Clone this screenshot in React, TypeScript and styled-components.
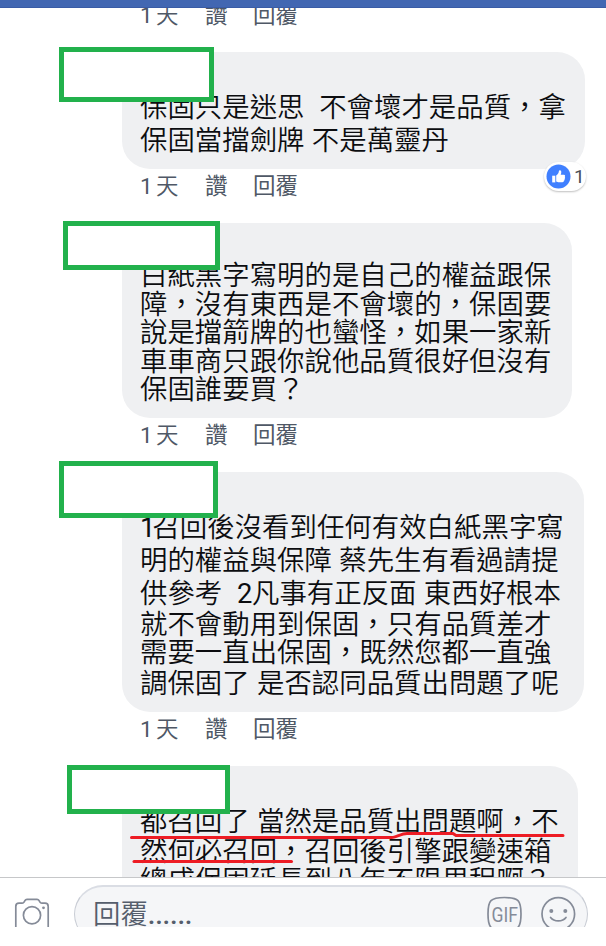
import React from "react";
import styled, { createGlobalStyle } from "styled-components";

const GlobalStyle = createGlobalStyle`
  html, body { margin: 0; padding: 0; background: #fff; }
  body { font-family: Roboto, "Noto Sans CJK TC", sans-serif; overflow: hidden; }
`;

const Screen = styled.main`
  width: 606px;
  height: 927px;
  display: flex;
  flex-direction: column;
  background: #fff;
  overflow: hidden;
`;

const TopBar = styled.header`
  flex: none;
  height: 7px;
  background: #4267b2;
  border-bottom: 1px solid #3a5ca6;
`;

const Feed = styled.section`
  flex: 1;
  min-height: 0;
  overflow: hidden;
`;

const PreviousComment = styled.div`
  display: flex;
  flex-direction: column;
  justify-content: flex-end;
  height: 44px;
  padding-left: 122px;
`;

const Comment = styled.article`
  position: relative;
  padding-left: 122px;
`;

const Bubble = styled.div<{ $width: number; $height: number; $top: number }>`
  box-sizing: border-box;
  width: ${(p) => p.$width}px;
  height: ${(p) => p.$height}px;
  padding: ${(p) => p.$top}px 0 0 18px;
  border-radius: 28px;
  background: #eff0f2;
`;

const Line = styled.div<{ $height: number }>`
  height: ${(p) => p.$height}px;
  line-height: ${(p) => p.$height}px;
  font-size: 27.4px;
  font-weight: 350;
  letter-spacing: 0.03px;
  word-spacing: 0.6px;
  color: #0c0d10;
  white-space: pre;
`;

const Digit = styled.span<{ $tight?: boolean }>`
  font-weight: 400;
  letter-spacing: ${(p) => (p.$tight ? -3 : -0.3)}px;
`;

const Meta = styled.div<{ $after: number }>`
  display: flex;
  height: 34px;
  padding-left: 18px;
  margin-bottom: ${(p) => p.$after}px;
  line-height: 34px;
  font-size: 22.5px;
  font-weight: 400;
  color: #4f5866;
  white-space: pre;
`;

const Age = styled.span`
  width: 65px;
  font-weight: 350;
  word-spacing: -1.8px;
`;

const Action = styled.span<{ $width: number }>`
  width: ${(p) => p.$width}px;
`;

const Redaction = styled.div<{ $x: number; $y: number; $w: number; $h: number }>`
  position: absolute;
  left: ${(p) => p.$x}px;
  top: ${(p) => p.$y}px;
  box-sizing: border-box;
  width: ${(p) => p.$w}px;
  height: ${(p) => p.$h}px;
  border: 5px solid #22b14c;
  background: #fff;
`;

const Reaction = styled.div`
  position: absolute;
  left: 544px;
  top: 110px;
  box-sizing: border-box;
  display: flex;
  align-items: center;
  gap: 3px;
  width: 42px;
  height: 29px;
  padding-left: 2px;
  border-radius: 15px;
  background: #fff;
  box-shadow: 0 1px 2px rgba(0, 0, 0, 0.25);
  font-size: 19px;
  color: #4b4f56;
`;

const Underlines = styled.svg`
  position: absolute;
  left: 0;
  top: 60px;
`;

const Composer = styled.footer`
  flex: none;
  box-sizing: border-box;
  display: flex;
  height: 50px;
  border-top: 1px solid #c6c7c9;
  padding: 7px 0 0 14px;
  background: #fff;
`;

const CameraSlot = styled.div`
  width: 60px;
  padding-top: 13px;
`;

const ReplyField = styled.div`
  box-sizing: border-box;
  display: flex;
  width: 514px;
  height: 58px;
  padding: 9px 11px 0 18px;
  border: 1px solid #c8ccd4;
  border-top: 2px solid #dadde4;
  border-radius: 29px;
  background: #f5f6f8;
`;

const Placeholder = styled.span`
  flex: 1;
  line-height: 38px;
  font-size: 27.4px;
  font-weight: 350;
  color: #555e6c;
`;

const Dots = styled.span`
  font-weight: 500;
  letter-spacing: -0.2px;
`;

const ToolIcons = styled.div`
  display: flex;
  gap: 18px;
`;

type CommentData = {
  width: number;
  height: number;
  top: number;
  lines: [React.ReactNode, number][];
  box: [number, number, number, number];
  after: number;
};

const comments: CommentData[] = [
  {
    width: 463, height: 117, top: 40, after: 20, box: [59, -5, 155, 55],
    lines: [["保固只是迷思  不會壞才是品質，拿", 33], ["保固當擋劍牌 不是萬靈丹", 33]],
  },
  {
    width: 450, height: 195, top: 39, after: 20, box: [63, -2, 157, 49],
    lines: [
      ["白紙黑字寫明的是自己的權益跟保", 28.6],
      ["障，沒有東西是不會壞的，保固要", 28.6],
      ["說是擋箭牌的也蠻怪，如果一家新", 28.6],
      ["車車商只跟你說他品質很好但沒有", 28.6],
      ["保固誰要買？", 28.6],
    ],
  },
  {
    width: 462, height: 240, top: 40, after: 20, box: [59, -11, 159, 57],
    lines: [
      [<><Digit $tight>1</Digit>召回後沒看到任何有效白紙黑字寫</>, 33],
      ["明的權益與保障 蔡先生有看過請提", 33],
      [<>供參考  <Digit>2</Digit>凡事有正反面 東西好根本</>, 33],
      ["就不會動用到保固，只有品質差才", 28],
      ["需要一直出保固，既然您都一直強", 28.5],
      ["調保固了 是否認同品質出問題了呢", 33],
    ],
  },
  {
    width: 456, height: 240, top: 40, after: 0, box: [67, -1, 163, 49],
    lines: [
      ["都召回了 當然是品質出問題啊，不", 32],
      ["然何必召回，召回後引擎跟變速箱", 28],
      ["總成保固延長到八年不限里程啊？", 30.6],
    ],
  },
];

const MetaRow = ({ after }: { after: number }) => (
  <Meta $after={after}>
    <Age><Digit>1</Digit> 天</Age>
    <Action $width={48}>讚</Action>
    <Action $width={60}>回覆</Action>
  </Meta>
);

const LikeIcon = () => (
  <svg width="25" height="25" viewBox="0 0 25 25">
    <circle cx="12.5" cy="12.5" r="12" fill="#4080ff" />
    <path d="M6.2 11.7h3.1v6.7H6.2z" fill="#fff" />
    <path d="M10.2 11.5c1.8-1.2 2.5-2.3 2.7-4.4.1-1.2 2.4-1 2.4 1 0 1-.3 1.8-.6 2.7h3.1c1.5 0 1.7 1.6.9 2.2.7.6.5 1.5-.2 1.9.4.7.1 1.4-.6 1.7.1 1-.5 1.7-1.5 1.7h-3.3c-1.3 0-1.9-.4-2.9-.8z" fill="#fff" />
  </svg>
);

const CameraIcon = () => (
  <svg width="36" height="34" viewBox="0 0 36 34" fill="none" stroke="#858b98" strokeWidth="1.7">
    <path d="M5 5.2h3.2c1 0 1.5-.4 2-1.3l.7-1.3c.5-.9 1.2-1.2 2.1-1.2h10c.9 0 1.6.3 2.1 1.2l.7 1.3c.5.9 1 1.3 2 1.3H31c2 0 3.2 1.2 3.2 3.2V29c0 2-1.2 3.2-3.2 3.2H5c-2 0-3.2-1.2-3.2-3.2V8.4c0-2 1.2-3.2 3.2-3.2z" />
    <circle cx="18" cy="17.3" r="8.6" />
    <circle cx="29.5" cy="9.8" r="1.4" fill="#858b98" stroke="none" />
  </svg>
);

const GifIcon = () => (
  <svg width="36" height="36" viewBox="0 0 36 36">
    <path d="M18.5 1.5c14 0 16.5 3 16.5 16.5s-2.5 16.5-16.5 16.5S2 31.500 2 18 4.500 1.500 18.500 1.500z" fill="none" stroke="#858b98" strokeWidth="1.7" />
    <text x="5.5" y="25.5" textLength="26.5" lengthAdjust="spacingAndGlyphs" fontFamily="Roboto" fontSize="21" fontWeight="400" fill="#858b98">GIF</text>
  </svg>
);

const SmileIcon = () => (
  <svg width="36" height="36" viewBox="0 0 36 36" fill="none" stroke="#858b98" strokeWidth="1.7">
    <circle cx="18.3" cy="18" r="16.3" />
    <circle cx="11.3" cy="15" r="2" fill="#858b98" stroke="none" />
    <circle cx="25.3" cy="15" r="2" fill="#858b98" stroke="none" />
    <path d="M10.6 21.5c3.5 4.6 11.9 4.6 15.4 0" strokeLinecap="round" />
  </svg>
);

export default function App() {
  return (
    <Screen>
      <GlobalStyle />
      <TopBar />
      <Feed>
        <PreviousComment>
          <MetaRow after={20} />
        </PreviousComment>
        {comments.map((c, i) => (
          <Comment key={i}>
            <Bubble $width={c.width} $height={c.height} $top={c.top}>
              {c.lines.map(([text, h], n) => (
                <Line key={n} $height={h}>{text}</Line>
              ))}
            </Bubble>
            <Redaction $x={c.box[0]} $y={c.box[1]} $w={c.box[2]} $h={c.box[3]} />
            {i === 0 && (
              <Reaction>
                <LikeIcon />1
              </Reaction>
            )}
            {i === 3 && (
              <Underlines width="606" height="50" fill="none" stroke="#ed1c24" strokeWidth="3" strokeLinecap="round" strokeLinejoin="round">
                <path d="M131.5 11.5H392c3 0 10-4 15-4h46l3 2h107" />
                <path d="M134 35.5H291.5" />
              </Underlines>
            )}
            {i < 3 && <MetaRow after={c.after} />}
          </Comment>
        ))}
      </Feed>
      <Composer>
        <CameraSlot><CameraIcon /></CameraSlot>
        <ReplyField>
          <Placeholder>回覆<Dots>......</Dots></Placeholder>
          <ToolIcons><GifIcon /><SmileIcon /></ToolIcons>
        </ReplyField>
      </Composer>
    </Screen>
  );
}
